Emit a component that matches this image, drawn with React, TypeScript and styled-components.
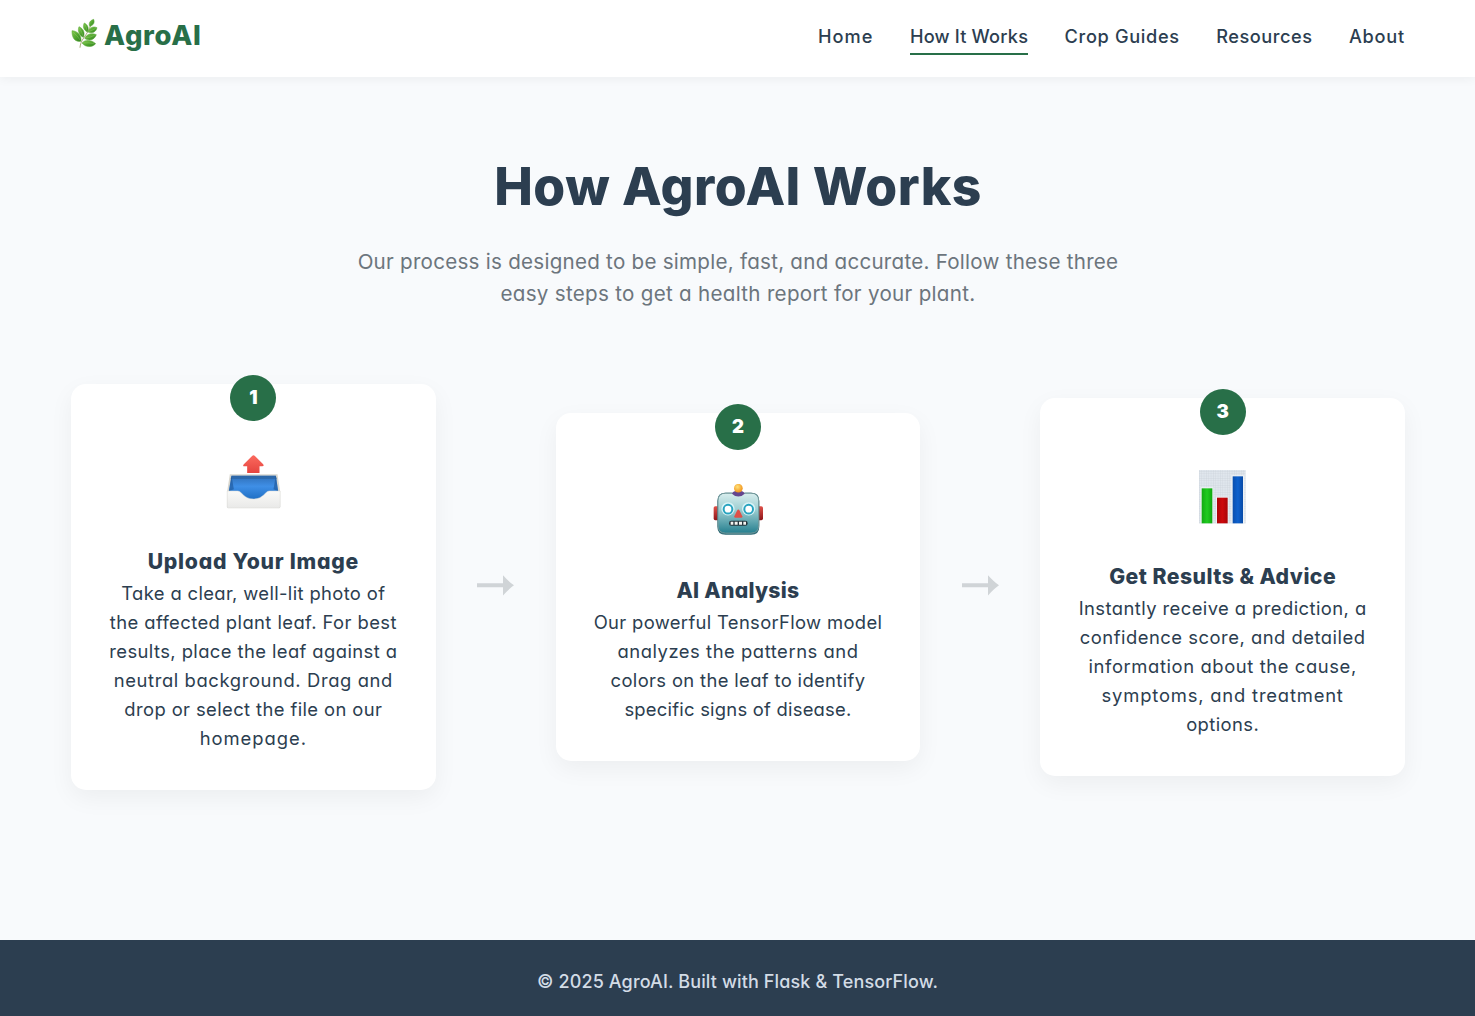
import React from 'react';
import styled, { createGlobalStyle } from 'styled-components';

const GlobalStyle = createGlobalStyle`
  *, *::before, *::after { box-sizing: border-box; }
  body {
    margin: 0;
    background: #f8fafc;
    color: #2c3e50;
    font-family: Inter, 'Open Sans', sans-serif;
    font-feature-settings: 'cv11';
    font-size: 18.4px;
    line-height: 29px;
  }
  h1, h3, p { margin: 0; }
`;

const Page = styled.div`
  min-height: 1016px;
  display: flex;
  flex-direction: column;
`;

const Header = styled.header`
  height: 77px;
  padding: 0 70px;
  display: flex;
  justify-content: space-between;
  background: #fff;
  box-shadow: 0 2px 10px rgba(0, 0, 0, 0.05);
  z-index: 1;
`;

const Logo = styled.a`
  display: flex;
  align-items: flex-start;
  gap: 6px;
  padding-top: 18px;
  color: #286f48;
  font-size: 27.4px;
  font-weight: 800;
  line-height: 35px;
  letter-spacing: 0.7px;
`;

const Nav = styled.nav`
  display: flex;
  align-items: flex-start;
  gap: 36.5px;
  padding-top: 22px;
`;

const NavLink = styled.a<{ $tracking: number; $active?: boolean }>`
  height: 33px;
  font-size: 18.2px;
  font-weight: 500;
  white-space: nowrap;
  letter-spacing: ${p => p.$tracking}px;
  border-bottom: 2px solid ${p => (p.$active ? '#286f48' : 'transparent')};
`;

const Main = styled.main`
  flex: 1;
  padding: 79px 70px 0 71px;
`;

const Title = styled.h1`
  font-size: 51.6px;
  font-weight: 800;
  line-height: 60px;
  letter-spacing: 0.5px;
  text-align: center;
`;

const Subtitle = styled.p`
  margin-top: 30px;
  color: #6c757d;
  font-size: 20.6px;
  line-height: 32px;
  text-align: center;
`;

const Line = styled.span<{ $tracking: number }>`
  display: block;
  white-space: nowrap;
  letter-spacing: ${p => p.$tracking}px;
`;

const Steps = styled.section`
  margin-top: 73.8px;
  display: grid;
  grid-template-columns: 1fr 120px 1fr 120px 1fr;
  align-items: center;
`;

const Card = styled.article`
  position: relative;
  padding: 37.4px 0 37px;
  background: #fff;
  border-radius: 15px;
  box-shadow: 0 8px 25px rgba(0, 0, 0, 0.05);
  text-align: center;
`;

const StepNumber = styled.div`
  position: absolute;
  top: -9px;
  left: calc(50% - 23px);
  width: 46px;
  height: 46px;
  border-radius: 50%;
  background: #286f48;
  color: #fff;
  font-size: 18.5px;
  font-weight: 900;
  line-height: 45px;
`;

const IconBox = styled.div`
  height: 124px;
  display: flex;
  align-items: center;
  justify-content: center;
`;

const CardTitle = styled.h3<{ $tracking: number }>`
  padding-bottom: 2px;
  font-size: 21.2px;
  font-weight: 800;
  line-height: 32px;
  letter-spacing: ${p => p.$tracking}px;
`;

const ArrowBox = styled.div`
  display: flex;
  justify-content: center;
  padding-bottom: 3px;
`;

const Footer = styled.footer`
  height: 76px;
  padding-top: 27px;
  background: #2c3e50;
  color: #d3dce6;
  font-size: 18px;
  font-weight: 500;
  text-align: center;
  letter-spacing: 0.13px;
`;

const LeafIcon = () => (
  <svg width="28" height="30.67" viewBox="30 24 84 92">
    <defs>
      <linearGradient id="leaf" x1="0" y1="0" x2="1" y2="1">
        <stop offset="0" stopColor="#83c94d" />
        <stop offset="0.55" stopColor="#4fa32f" />
        <stop offset="1" stopColor="#2f7d20" />
      </linearGradient>
    </defs>
    <path d="M60 112C61 102 64 94 71 84C80 71 88 60 93 44" fill="none" stroke="#9a9d63" strokeWidth="2.6" strokeLinecap="round" />
    <g fill="url(#leaf)" stroke="#5aa838" strokeWidth="1.6" strokeLinejoin="round">
      <path d="M36 62C53 63 65 76 63 94C46 97 35 84 36 62Z" />
      <path d="M66 99C76 87 96 90 107 101C96 113 77 113 66 99Z" />
      <path d="M57 50C70 56 76 68 70 82C57 76 52 62 57 50Z" />
      <path d="M74 85C80 72 95 68 109 74C104 89 87 95 74 85Z" />
      <path d="M73 39C84 45 88 56 82 66C71 60 67 50 73 39Z" />
      <path d="M84 66C89 52 100 48 111 53C108 66 96 72 84 66Z" />
      <path d="M89 49C85 39 91 31 101 28C105 38 100 47 89 49Z" />
    </g>
    <g fill="none" stroke="#b3df83" strokeWidth="1.1" opacity="0.8">
      <path d="M40 67Q52 77 61 91M70 99Q85 97 102 101M59 55Q66 66 69 78M77 84Q91 82 104 76M75 44Q80 53 81 62M87 64Q98 61 107 55" />
    </g>
  </svg>
);

const UploadIcon = () => (
  <svg width="56" height="56" viewBox="45.5 269 168 168">
    <defs>
      <linearGradient id="trayInside" x1="0" y1="0" x2="0" y2="1">
        <stop offset="0" stopColor="#2f6fb8" />
        <stop offset="0.45" stopColor="#3f8fe6" />
        <stop offset="1" stopColor="#1f6fc4" />
      </linearGradient>
      <linearGradient id="trayFront" x1="0" y1="0" x2="0" y2="1">
        <stop offset="0" stopColor="#fafaf8" />
        <stop offset="1" stopColor="#e9e9e8" />
      </linearGradient>
      <linearGradient id="arrowRed" x1="0" y1="0" x2="0" y2="1">
        <stop offset="0" stopColor="#fb6a5e" />
        <stop offset="1" stopColor="#e5443f" />
      </linearGradient>
    </defs>
    <path d="M60 327H203L211 378V424Q211 428 207 428H56Q52 428 52 424V378Z" fill="#d9d7cf" />
    <path d="M65 331H198L205 378L190 402H75L57 378Z" fill="url(#trayInside)" />
    <path d="M65 331H198L201 341H62Z" fill="#2b62a0" opacity="0.65" />
    <path d="M65 331L72 372L57 378ZM198 331L191 372L205 378Z" fill="#1d5394" opacity="0.6" />
    <path d="M52 377H83C97 377 100 401 131 401C162 401 165 377 179 377H211V424Q211 428 207 428H56Q52 428 52 424Z" fill="url(#trayFront)" stroke="#d9d9d6" strokeWidth="1.5" />
    <path d="M131 270Q133 270 136 273L160 297Q164 303 157 303H149V323H112V303H104Q97 303 102 297L126 273Q129 270 131 270Z" fill="url(#arrowRed)" />
  </svg>
);

const RobotIcon = () => (
  <svg width="56" height="56" viewBox="45 266.5 168 168">
    <defs>
      <linearGradient id="face" x1="0" y1="0" x2="0" y2="1">
        <stop offset="0" stopColor="#d9eeee" />
        <stop offset="0.4" stopColor="#9fcfd2" />
        <stop offset="1" stopColor="#257f8f" />
      </linearGradient>
      <linearGradient id="ear" x1="0" y1="0" x2="0" y2="1">
        <stop offset="0" stopColor="#e0524a" />
        <stop offset="1" stopColor="#8d1518" />
      </linearGradient>
      <radialGradient id="bulb" cx="0.4" cy="0.35" r="0.7">
        <stop offset="0" stopColor="#ffe27a" />
        <stop offset="1" stopColor="#f08c13" />
      </radialGradient>
    </defs>
    <rect x="56" y="333" width="17" height="42" rx="5" fill="url(#ear)" />
    <rect x="187" y="333" width="17" height="42" rx="5" fill="url(#ear)" />
    <path d="M92 293H110Q130 307 150 293H168Q193 293 193 318V394Q193 419 168 419H92Q67 419 67 394V318Q67 293 92 293Z" fill="#2b6874" />
    <path d="M92 294H168Q191 294 191 317V390Q191 414 168 414H92Q69 414 69 390V317Q69 294 92 294Z" fill="url(#face)" stroke="#769a9c" strokeWidth="3" />
    <path d="M111 296Q113 287 130 287Q147 287 149 296Q142 304 130 304Q118 304 111 296Z" fill="#65468e" />
    <circle cx="130" cy="279" r="13" fill="url(#bulb)" />
    <circle cx="99" cy="341" r="20" fill="#d8f3f7" />
    <circle cx="161" cy="341" r="20" fill="#d8f3f7" />
    <circle cx="99" cy="342" r="13" fill="#fff" stroke="#27a3bf" strokeWidth="6" />
    <circle cx="161" cy="342" r="13" fill="#fff" stroke="#27a3bf" strokeWidth="6" />
    <path d="M130 343Q132 343 134 347L142 363Q143 368 138 368H122Q117 368 118 363L126 347Q128 343 130 343Z" fill="#de5148" />
    <rect x="102" y="377" width="56" height="15" rx="7" fill="#25363d" />
    <path d="M107 380h8v9h-8zM119 380h9v9h-9zM132 380h9v9h-9zM145 380h8v9h-8z" fill="#f4f4f0" />
  </svg>
);

const ChartIcon = () => (
  <svg width="56" height="56" viewBox="46 268 168 168">
    <defs>
      <pattern id="grid" x="58" y="265" width="7" height="7" patternUnits="userSpaceOnUse">
        <rect width="7" height="7" fill="#e0e6ed" />
        <path d="M0 0H7M0 0V7" stroke="#c4cbd4" strokeWidth="1.6" />
      </pattern>
      <linearGradient id="green"><stop offset="0" stopColor="#12a912" /><stop offset="0.5" stopColor="#20cb20" /><stop offset="1" stopColor="#10a810" /></linearGradient>
      <linearGradient id="red"><stop offset="0" stopColor="#ad0508" /><stop offset="0.5" stopColor="#cd090c" /><stop offset="1" stopColor="#a90508" /></linearGradient>
      <linearGradient id="blue"><stop offset="0" stopColor="#0a4fae" /><stop offset="0.5" stopColor="#0d61ce" /><stop offset="1" stopColor="#094ba6" /></linearGradient>
    </defs>
    <g transform="translate(0 -1)">
      <rect x="58" y="265.500" width="140" height="164" fill="url(#grid)" />
      <path d="M63 321h38v108H63zM109 349h37v80h-37zM155 285h39v144h-39z" fill="#eef2f5" />
      <rect x="66" y="324" width="32" height="105" fill="url(#green)" />
      <rect x="112" y="352" width="32" height="77" fill="url(#red)" />
      <rect x="159" y="288" width="31" height="141" fill="url(#blue)" />
    </g>
  </svg>
);

const Arrow = () => (
  <ArrowBox>
    <svg width="37" height="21" viewBox="0 0 37 21">
      <path d="M0 8.3H26V0.3Q32 7 37 10.3Q32 13.6 26 20.5V12.3H0Z" fill="#d0d4d7" />
    </svg>
  </ArrowBox>
);

type TextLine = [string, number];

const links: { label: string; tracking: number; active?: boolean }[] = [
  { label: 'Home', tracking: 1.0 },
  { label: 'How It Works', tracking: 0.18, active: true },
  { label: 'Crop Guides', tracking: 0.66 },
  { label: 'Resources', tracking: 0.5 },
  { label: 'About', tracking: 0.76 },
];

const steps: { icon: React.ReactNode; title: string; tracking: number; lines: TextLine[] }[] = [
  {
    icon: <UploadIcon />,
    title: 'Upload Your Image',
    tracking: 0.75,
    lines: [
      ['Take a clear, well-lit photo of', 0.36],
      ['the affected plant leaf. For best', 0.42],
      ['results, place the leaf against a', 0.41],
      ['neutral background. Drag and', 0.61],
      ['drop or select the file on our', 0.4],
      ['homepage.', 0.98],
    ],
  },
  {
    icon: <RobotIcon />,
    title: 'AI Analysis',
    tracking: 0.27,
    lines: [
      ['Our powerful TensorFlow model', 0.34],
      ['analyzes the patterns and', 0.54],
      ['colors on the leaf to identify', 0.36],
      ['specific signs of disease.', 0.24],
    ],
  },
  {
    icon: <ChartIcon />,
    title: 'Get Results & Advice',
    tracking: 0.48,
    lines: [
      ['Instantly receive a prediction, a', 0.43],
      ['confidence score, and detailed', 0.51],
      ['information about the cause,', 0.6],
      ['symptoms, and treatment', 0.81],
      ['options.', 0.42],
    ],
  },
];

export default function App() {
  return (
    <Page>
      <GlobalStyle />
      <Header>
        <Logo><LeafIcon />AgroAI</Logo>
        <Nav>
          {links.map(l => (
            <NavLink key={l.label} $tracking={l.tracking} $active={l.active}>{l.label}</NavLink>
          ))}
        </Nav>
      </Header>
      <Main>
        <Title>How AgroAI Works</Title>
        <Subtitle>
          <Line $tracking={0.25}>Our process is designed to be simple, fast, and accurate. Follow these three</Line>
          <Line $tracking={0.29}>easy steps to get a health report for your plant.</Line>
        </Subtitle>
        <Steps>
          {steps.map((s, i) => (
            <React.Fragment key={s.title}>
              {i > 0 && <Arrow />}
              <Card>
                <StepNumber>{i + 1}</StepNumber>
                <IconBox>{s.icon}</IconBox>
                <CardTitle $tracking={s.tracking}>{s.title}</CardTitle>
                <p>
                  {s.lines.map(([text, tracking]) => (
                    <Line key={text} $tracking={tracking}>{text}</Line>
                  ))}
                </p>
              </Card>
            </React.Fragment>
          ))}
        </Steps>
      </Main>
      <Footer>© 2025 AgroAI. Built with Flask &amp; TensorFlow.</Footer>
    </Page>
  );
}
